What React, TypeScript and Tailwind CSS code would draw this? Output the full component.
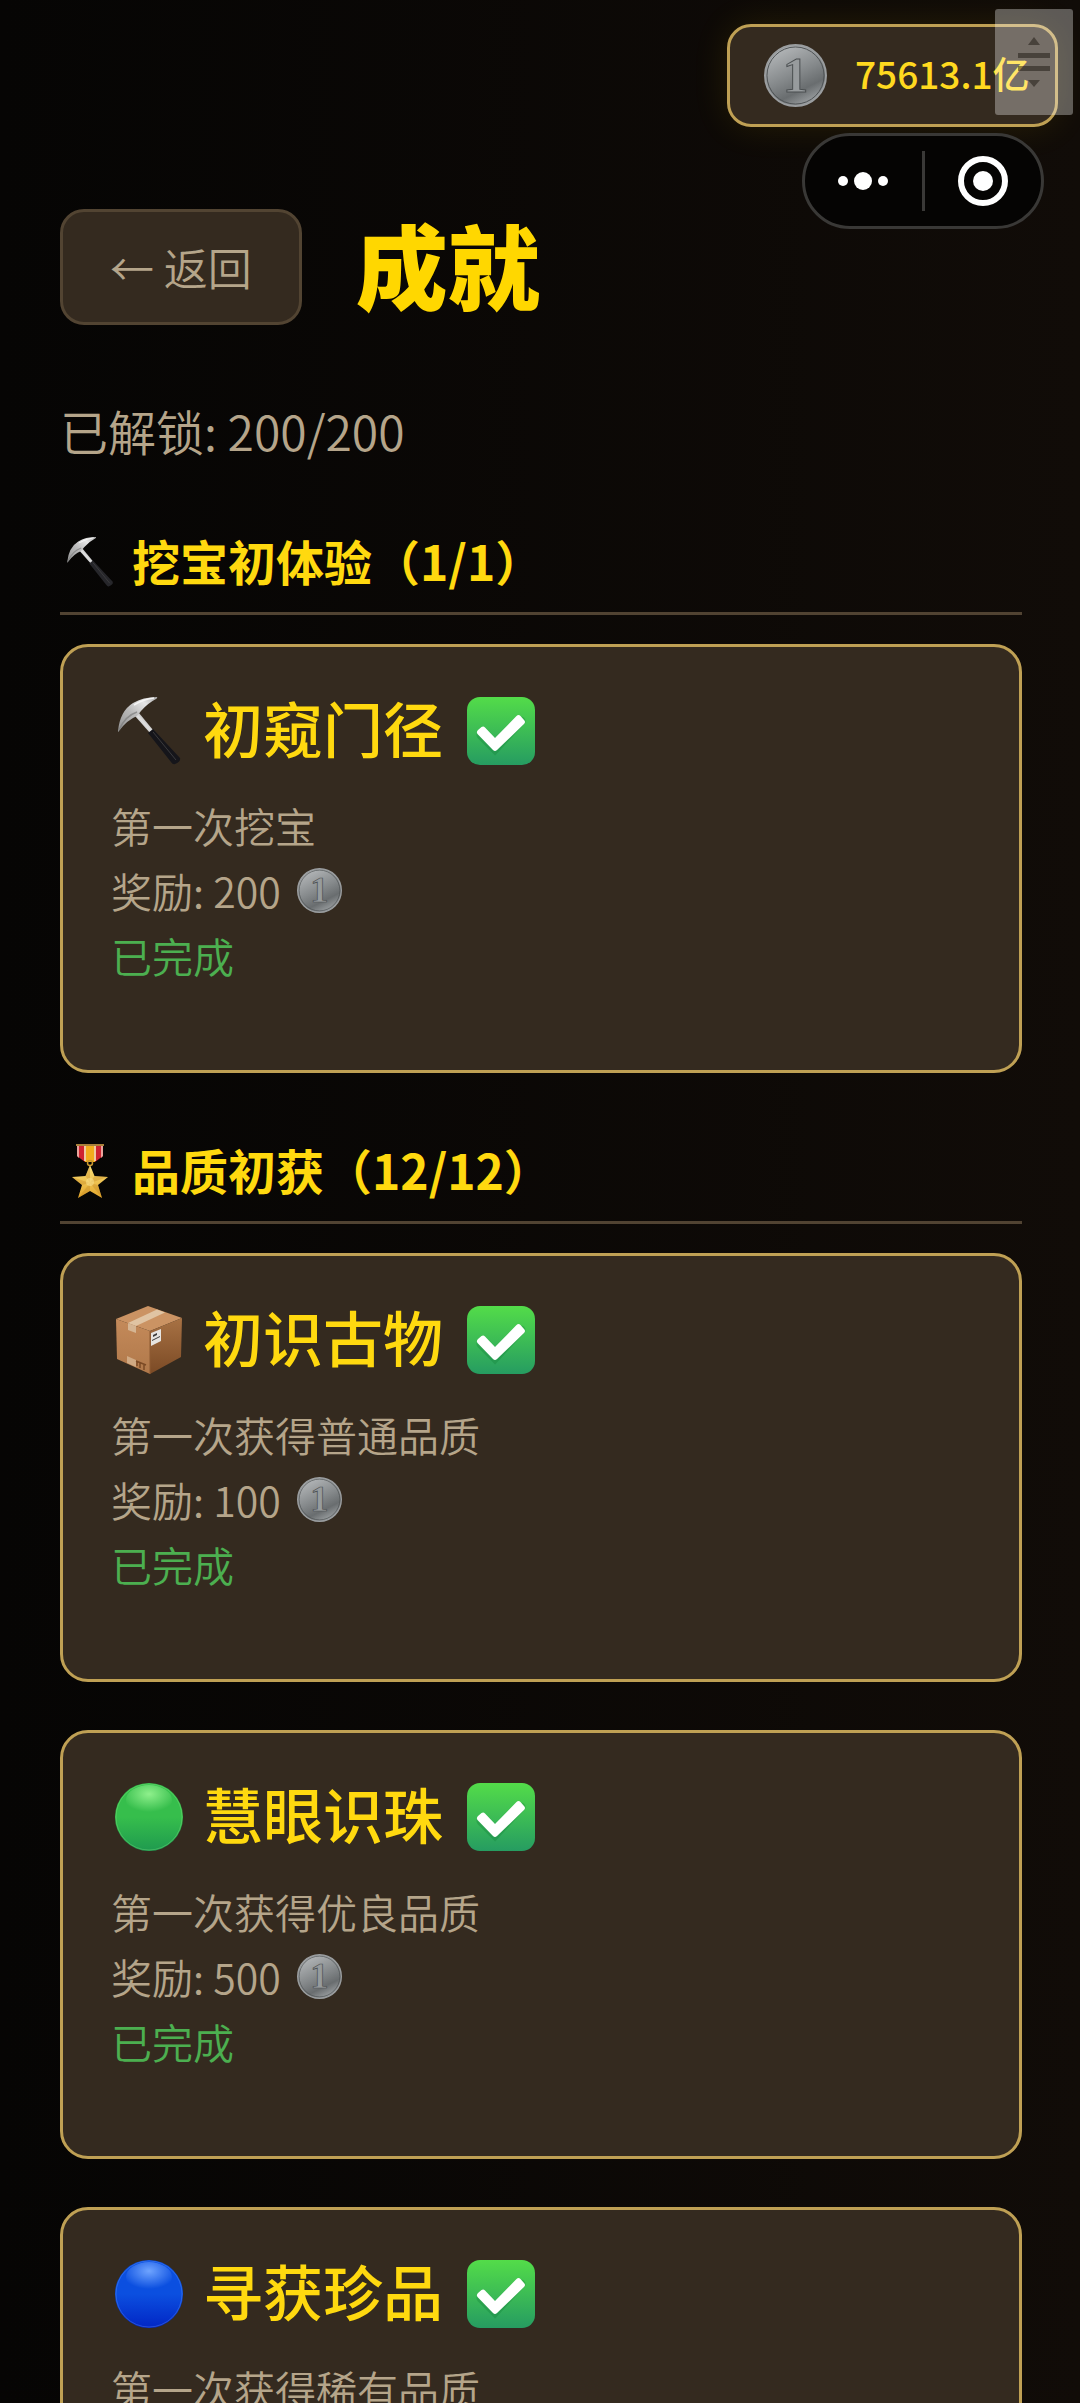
import React from "react";

type Achievement = {
  icon: React.ReactNode;
  name: string;
  desc: string;
  reward: number;
};

type Group = {
  icon: React.ReactNode;
  title: string;
  items: Achievement[];
};

/* ===== ICONS ===== */

function PickIcon({ id, className, handle = "#15151a" }: { id: string; className: string; handle?: string }) {
  return (
    <svg viewBox="0 0 64 68" className={className} aria-hidden="true">
      <defs>
        <linearGradient id={id + "-head"} x1="0" y1="1" x2="1" y2="0">
          <stop offset="0" stopColor="#8f8f8f" />
          <stop offset="0.45" stopColor="#b9b9b9" />
          <stop offset="0.75" stopColor="#e6e6e6" />
          <stop offset="1" stopColor="#a9a9a9" />
        </linearGradient>
        <linearGradient id={id + "-rod"} x1="0" y1="1" x2="1" y2="0">
          <stop offset="0" stopColor="#8a8a8a" />
          <stop offset="0.5" stopColor="#e0e0e0" />
          <stop offset="1" stopColor="#6d6d6d" />
        </linearGradient>
      </defs>
      <path d="M18 19 L22 16 L36 33 L33 36 Z" fill={"url(#" + id + "-rod)"} />
      <path d="M31 36 L36 32 L63 61 Q64 65 58 67 Q56 68 54 65 Z" fill={handle} />
      <path d="M36 35 L59 63" stroke="#5a5a5a" strokeWidth="1" opacity="0.55" />
      <path d="M1 34 Q3 14 16 6 Q26 0 40 0 Q41 1 39 2 Q31 6 24 14 L20 19 Q10 23 2 34 Q1 36 1 34 Z" fill={"url(#" + id + "-head)"} />
      <path d="M2 33 Q8 19 20 15" stroke="#7c7c7c" strokeWidth="1.500" fill="none" opacity="0.7" />
      <path d="M17 8 Q27 2 37 1" stroke="#f4f4f4" strokeWidth="1.500" fill="none" />
    </svg>
  );
}

function MedalIcon({ className }: { className: string }) {
  return (
    <svg viewBox="6 0 36 54" className={className} aria-hidden="true">
      <defs>
        <linearGradient id="medal-star" x1="0" y1="0" x2="0" y2="1">
          <stop offset="0" stopColor="#fbe07a" />
          <stop offset="1" stopColor="#e2a62b" />
        </linearGradient>
      </defs>
      <path d="M11 0 H37 V12 L29 18 H19 L11 12 Z" fill="#cf2430" />
      <path d="M11 0 H13 V14 L11 12 Z M35 0 H37 V12 L35 14 Z" fill="#e9a49c" />
      <path d="M19 0 H29 V18 H19 Z" fill="#f2ad1c" />
      <path d="M18 0 H20 V17 H18 Z M28 0 H30 V17 H28 Z" fill="#f0c9a0" />
      <path d="M10 0 H38 V2 H10 Z" fill="#a9803a" />
      <circle cx="24" cy="19" r="2.500" fill="none" stroke="#c9962f" strokeWidth="1.500" />
      <path
        d="M24 21 L28.500 32 L42 33 L32 41 L36 54 L24 47 L12 54 L16 41 L6 33 L19.500 32 Z"
        fill="url(#medal-star)"
      />
      <path d="M24 21 V39 L19.500 32 Z M42 33 L24 39 L28.500 32 Z M36 54 L24 39 L32 41 Z M12 54 L24 39 L24 47 Z M6 33 L24 39 L16 41 Z" fill="#b97c1c" opacity="0.3" />
      <circle cx="24" cy="38" r="4" fill="#f9e08c" opacity="0.6" />
    </svg>
  );
}

function BoxIcon({ className }: { className: string }) {
  return (
    <svg viewBox="0 0 66 68" className={className} aria-hidden="true">
      <defs>
        <linearGradient id="box-side" x1="0" y1="0" x2="0" y2="1">
          <stop offset="0" stopColor="#a87244" />
          <stop offset="1" stopColor="#7b4a25" />
        </linearGradient>
        <linearGradient id="box-front" x1="0" y1="0" x2="0" y2="1">
          <stop offset="0" stopColor="#c48a5a" />
          <stop offset="1" stopColor="#b0784a" />
        </linearGradient>
      </defs>
      <path d="M0 13 L32 0 L66 12 L34 25 Z" fill="#cb9363" />
      <path d="M0 13 L34 25 V68 L1 53 Z" fill="url(#box-front)" />
      <path d="M34 25 L66 12 L65 51 L34 68 Z" fill="url(#box-side)" />
      <path d="M12 17 L41 3.500 L49 6.500 L20 20 Z" fill="#e0c4a3" />
      <path d="M12 17 L20 20 V27 L12 24 Z" fill="#d5b593" />
      <path d="M11 50 L20 54 V61 L11 57 Z" fill="#d0aa84" />
      <path d="M34 25 V68" stroke="#8d5a32" strokeWidth="1" />
      <path d="M35 27 L45 23 V35 L35 40 Z" fill="#e6e4e0" />
      <path d="M37 29 L41 27 V29 L37 31 Z M36 34 L44 30 V31 L36 35 Z" fill="#3b3b3b" />
      <path d="M20 55 L30 59 M21 56 V60 M24 57 V62 M28 59 V64" stroke="#7b4a25" strokeWidth="1.500" />
    </svg>
  );
}

function BallIcon({ id, top, mid, bottom, className }: { id: string; top: string; mid: string; bottom: string; className: string }) {
  return (
    <svg viewBox="0 0 68 68" className={className} aria-hidden="true">
      <defs>
        <linearGradient id={id} x1="0" y1="0" x2="0" y2="1">
          <stop offset="0" stopColor={mid} />
          <stop offset="0.5" stopColor={mid} />
          <stop offset="1" stopColor={bottom} />
        </linearGradient>
        <radialGradient id={id + "-shine"} cx="0.5" cy="0.3" r="0.6">
          <stop offset="0" stopColor={top} />
          <stop offset="1" stopColor={top} stopOpacity="0" />
        </radialGradient>
      </defs>
      <circle cx="34" cy="34" r="34" fill={"url(#" + id + ")"} />
      <circle cx="34" cy="34" r="33" fill="none" stroke={top} strokeOpacity="0.3" />
      <ellipse cx="34" cy="17" rx="23" ry="15" fill={"url(#" + id + "-shine)"} />
    </svg>
  );
}

function CheckIcon({ id }: { id: string }) {
  return (
    <svg viewBox="0 0 68 68" className="size-[68px]" role="img" aria-label="已达成">
      <defs>
        <linearGradient id={id} x1="0" y1="0" x2="0" y2="1">
          <stop offset="0" stopColor="#53dc49" />
          <stop offset="1" stopColor="#269c61" />
        </linearGradient>
      </defs>
      <rect width="68" height="68" rx="13" fill={"url(#" + id + ")"} />
      <path d="M14 38 L28 52 L54 24" fill="none" stroke="#15823a" strokeOpacity="0.35" strokeWidth="9" strokeLinecap="round" />
      <path d="M10.500 37 Q9 35 11 33 L14.500 30 Q16.500 29 18 30.500 L28 41 L49.500 19 Q51.500 17 53.500 19 L57 23 Q59 25 57 27 L30 53 Q28 55 26 53 Z" fill="#ffffff" />
    </svg>
  );
}

function CoinIcon({ id, className }: { id: string; className: string }) {
  return (
    <svg viewBox="0 0 64 64" className={className} aria-hidden="true">
      <defs>
        <linearGradient id={id} x1="0.2" y1="0" x2="0.7" y2="1">
          <stop offset="0" stopColor="#b9bcbe" />
          <stop offset="0.5" stopColor="#85898b" />
          <stop offset="0.75" stopColor="#696d6f" />
          <stop offset="1" stopColor="#a2a6a8" />
        </linearGradient>
      </defs>
      <circle cx="32" cy="32" r="31" fill={"url(#" + id + ")"} stroke="#9a9d9f" strokeWidth="2" />
      <circle cx="32" cy="32" r="29" fill="none" stroke="#4e5254" strokeWidth="1" />
      <text x="32" y="49" textAnchor="middle" fontFamily="'Liberation Serif', serif" fontWeight="700" fontSize="52" fill="#979b9d" stroke="#4a4e50" strokeWidth="1">
        1
      </text>
    </svg>
  );
}

/* ===== DATA ===== */

const groups: Group[] = [
  {
    icon: <PickIcon id="pick-sm" className="w-12 h-[50px]" handle="#26262a" />,
    title: "挖宝初体验（1/1）",
    items: [
      {
        icon: <PickIcon id="pick-lg" className="w-16 h-[68px]" />,
        name: "初窥门径",
        desc: "第一次挖宝",
        reward: 200,
      },
    ],
  },
  {
    icon: <MedalIcon className="w-9 h-[54px]" />,
    title: "品质初获（12/12）",
    items: [
      {
        icon: <BoxIcon className="w-[66px] h-[68px]" />,
        name: "初识古物",
        desc: "第一次获得普通品质",
        reward: 100,
      },
      {
        icon: <BallIcon id="ball-green" top="#8ff08c" mid="#36be4c" bottom="#1f9a4f" className="size-[68px]" />,
        name: "慧眼识珠",
        desc: "第一次获得优良品质",
        reward: 500,
      },
      {
        icon: <BallIcon id="ball-blue" top="#6fa4ff" mid="#0b4fe0" bottom="#0226c4" className="size-[68px]" />,
        name: "寻获珍品",
        desc: "第一次获得稀有品质",
        reward: 1000,
      },
    ],
  },
];

function AchievementCard({ item, id }: { item: Achievement; id: string }) {
  return (
    <li className="rounded-[28px] border-3 border-[#bfa054] bg-[#342a1f] p-12">
      <div className="flex items-center h-[72px]">
        <span className="flex justify-center w-[76px] shrink-0">{item.icon}</span>
        <h3 className="ml-4 mr-6 pb-2 text-[60px] leading-[72px] font-medium text-[#ffd90f]">{item.name}</h3>
        <CheckIcon id={id + "-check"} />
      </div>
      <div className="mt-[26px] mb-[34px] text-[41px] leading-[65px] font-[350] text-[#b5a58a]">
        <p>{item.desc}</p>
        <p className="flex items-center">
          奖励: {item.reward}
          <CoinIcon id={id + "-coin"} className="ml-4 size-[45px]" />
        </p>
        <p className="text-[#4caf50]">已完成</p>
      </div>
    </li>
  );
}

export default function App() {
  return (
    <div className="relative h-screen overflow-hidden bg-linear-to-r from-[#060504] to-[#110c08] font-['Noto_Sans_CJK_SC','Noto_Sans',sans-serif]">
      <main className="h-full overflow-y-auto [scrollbar-width:none] pl-[60px] pr-[58px] pt-[209px] pb-12">
        {/* Header */}
        <header className="flex items-center">
          <button
            type="button"
            className="h-[116px] px-[47px] rounded-3xl border-3 border-[#524432] bg-[#342a1f] text-[44px] leading-none font-[350] text-[#b5a58a]"
          >
            ← 返回
          </button>
          <h1 className="ml-[54px] pb-2 text-[92px] leading-[108px] font-black text-[#ffd700]">成就</h1>
        </header>

        <p className="mt-[69px] text-5xl leading-[72px] font-[350] text-[#b5a58a]">已解锁: 200/200</p>

        {/* Achievement groups */}
        {groups.map((group, g) => (
          <section key={g} className="mt-[58px] not-first-of-type:mt-[60px]">
            <h2 className="flex items-center pb-4 border-b-3 border-[#514332] text-5xl leading-[72px] font-bold text-[#ffd90f]">
              <span className="flex justify-center w-[60px] mr-3 pt-1">{group.icon}</span>
              {group.title}
            </h2>
            <ul className="mt-[29px] flex flex-col gap-12">
              {group.items.map((item, i) => (
                <AchievementCard key={i} item={item} id={"a" + g + "-" + i} />
              ))}
            </ul>
          </section>
        ))}
      </main>

      {/* Coin balance */}
      <div className="absolute right-[22px] top-6 flex items-center w-[331px] h-[103px] pl-[34px] rounded-3xl border-3 border-[#bfa054] bg-[#342a1f] shadow-[0_0_36px_rgba(255,215,0,0.1)]">
        <CoinIcon id="balance-coin" className="size-[63px]" />
        <span className="ml-7 pb-1 text-[37px] leading-none font-medium text-[#ffd91f]">75613.1亿</span>
      </div>

      {/* Mini program capsule */}
      <div className="absolute right-9 top-[133px] flex items-center w-[242px] h-24 rounded-full border-3 border-[#393836] bg-[#050403]">
        <button type="button" aria-label="更多" className="flex flex-1 justify-center">
          <svg viewBox="0 0 50 18" className="w-[50px] h-[18px]" fill="#ffffff" aria-hidden="true">
            <circle cx="5" cy="9" r="5" />
            <circle cx="25" cy="9" r="9" />
            <circle cx="45" cy="9" r="5" />
          </svg>
        </button>
        <span className="w-[3px] h-[60px] bg-[#3a3937]"></span>
        <button type="button" aria-label="关闭" className="flex flex-1 justify-center">
          <svg viewBox="0 0 50 50" className="size-[50px]" aria-hidden="true">
            <circle cx="25" cy="25" r="22" fill="none" stroke="#ffffff" strokeWidth="6" />
            <circle cx="25" cy="25" r="10" fill="#ffffff" />
          </svg>
        </button>
      </div>

      {/* Floating scroll handle */}
      <button
        type="button"
        aria-label="滚动"
        className="absolute right-[7px] top-[9px] flex items-center justify-center w-[78px] h-[106px] rounded-[3px] bg-white/32"
      >
        <svg viewBox="0 0 32 52" className="w-8 h-[52px]" fill="#1c1510" fillOpacity="0.5" aria-hidden="true">
          <path d="M10 9 L16 1 L22 9 Z" />
          <rect y="17" width="32" height="5" />
          <rect y="30" width="32" height="5" />
          <path d="M10 44 L16 51 L22 44 Z" />
        </svg>
      </button>
    </div>
  );
}
